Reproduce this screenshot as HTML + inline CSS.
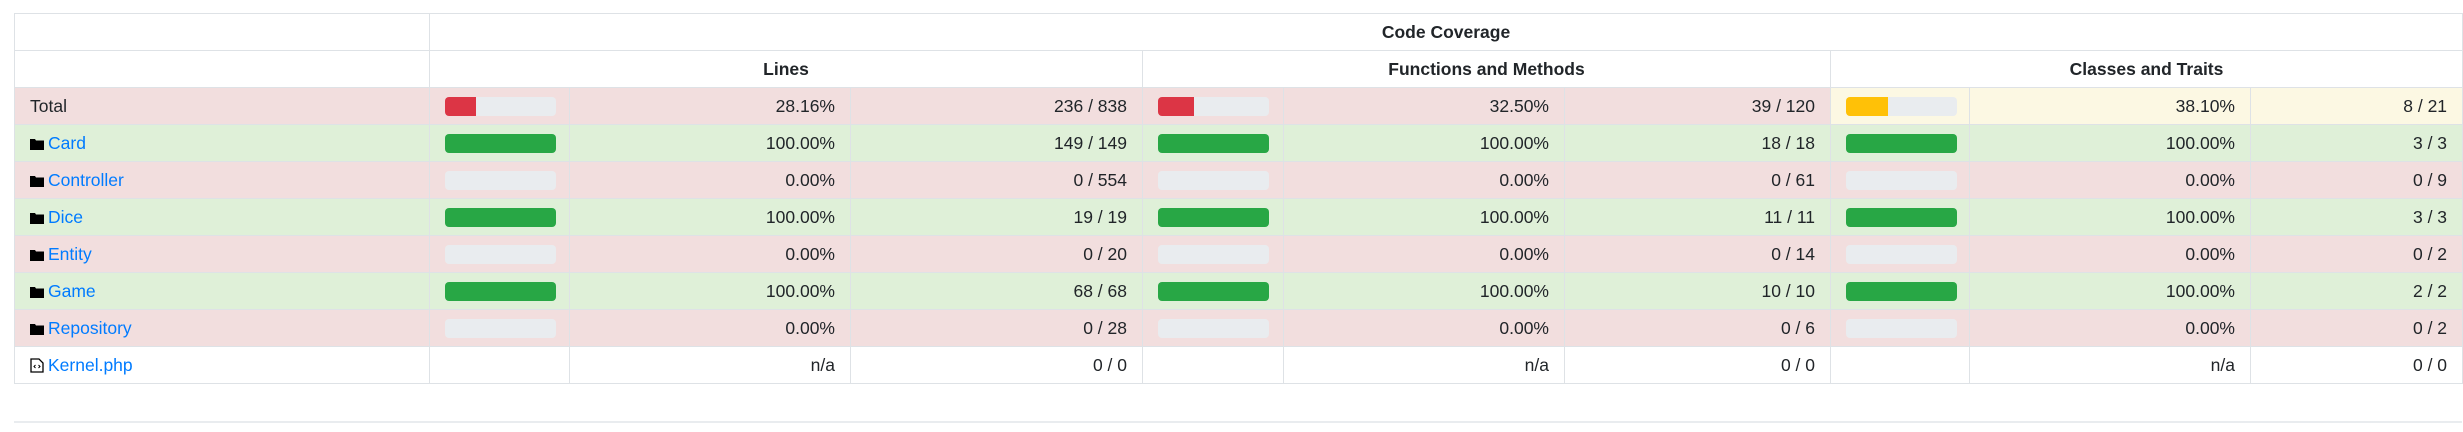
<!DOCTYPE html>
<html><head><meta charset="utf-8">
<style>
html,body{margin:0;padding:0;background:#fff;width:2463px;height:432px;overflow:hidden;}
body{font-family:"Liberation Sans",Arial,sans-serif;font-size:17.5px;color:#212529;position:relative;}
table{position:absolute;left:14px;top:13px;width:2448px;border-collapse:collapse;table-layout:fixed;}
td,th{border:1px solid #dee2e6;height:37px;padding:0 15px;box-sizing:border-box;white-space:nowrap;line-height:20px;}
th{font-weight:bold;text-align:center;}
td{text-align:right;}
td.n{text-align:left;}
.d{background:#f2dede}.s{background:#dff0d8}.w{background:#fcf8e3}
.bar{width:111px;height:19px;border-radius:4px;background:#e9ecef;overflow:hidden;}
.bar i{display:block;height:19px;}
.r{background:#dc3545}.g{background:#28a745}.y{background:#ffc107}
a{color:#007bff;text-decoration:none;}
svg{vertical-align:-1px;margin-right:4px;}
.hr{position:absolute;left:14px;top:421px;width:2448px;height:2px;background:#e9ecef;}
</style></head><body>
<table>
<colgroup><col style="width:415px"><col style="width:140px"><col style="width:281px"><col style="width:292px"><col style="width:141px"><col style="width:281px"><col style="width:266px"><col style="width:139px"><col style="width:281px"><col style="width:212px"></colgroup>
<tr><th style="border-right:1px solid #dee2e6"></th><th colspan="9">Code Coverage</th></tr>
<tr><th></th><th colspan="3">Lines</th><th colspan="3">Functions and Methods</th><th colspan="3">Classes and Traits</th></tr>
<tr><td class="n d">Total</td><td class="d"><div class="bar"><i class="r" style="width:31px"></i></div></td><td class="d">28.16%</td><td class="d">236 / 838</td><td class="d"><div class="bar"><i class="r" style="width:36px"></i></div></td><td class="d">32.50%</td><td class="d">39 / 120</td><td class="w"><div class="bar"><i class="y" style="width:42px"></i></div></td><td class="w">38.10%</td><td class="w">8 / 21</td></tr>
<tr><td class="n s"><svg width="14" height="12" viewBox="0 0 14 12"><path d="M0 1h5l1 1.5h8V12H0z" fill="#000"/></svg><a>Card</a></td><td class="s"><div class="bar"><i class="g" style="width:111px"></i></div></td><td class="s">100.00%</td><td class="s">149 / 149</td><td class="s"><div class="bar"><i class="g" style="width:111px"></i></div></td><td class="s">100.00%</td><td class="s">18 / 18</td><td class="s"><div class="bar"><i class="g" style="width:111px"></i></div></td><td class="s">100.00%</td><td class="s">3 / 3</td></tr>
<tr><td class="n d"><svg width="14" height="12" viewBox="0 0 14 12"><path d="M0 1h5l1 1.5h8V12H0z" fill="#000"/></svg><a>Controller</a></td><td class="d"><div class="bar"></div></td><td class="d">0.00%</td><td class="d">0 / 554</td><td class="d"><div class="bar"></div></td><td class="d">0.00%</td><td class="d">0 / 61</td><td class="d"><div class="bar"></div></td><td class="d">0.00%</td><td class="d">0 / 9</td></tr>
<tr><td class="n s"><svg width="14" height="12" viewBox="0 0 14 12"><path d="M0 1h5l1 1.5h8V12H0z" fill="#000"/></svg><a>Dice</a></td><td class="s"><div class="bar"><i class="g" style="width:111px"></i></div></td><td class="s">100.00%</td><td class="s">19 / 19</td><td class="s"><div class="bar"><i class="g" style="width:111px"></i></div></td><td class="s">100.00%</td><td class="s">11 / 11</td><td class="s"><div class="bar"><i class="g" style="width:111px"></i></div></td><td class="s">100.00%</td><td class="s">3 / 3</td></tr>
<tr><td class="n d"><svg width="14" height="12" viewBox="0 0 14 12"><path d="M0 1h5l1 1.5h8V12H0z" fill="#000"/></svg><a>Entity</a></td><td class="d"><div class="bar"></div></td><td class="d">0.00%</td><td class="d">0 / 20</td><td class="d"><div class="bar"></div></td><td class="d">0.00%</td><td class="d">0 / 14</td><td class="d"><div class="bar"></div></td><td class="d">0.00%</td><td class="d">0 / 2</td></tr>
<tr><td class="n s"><svg width="14" height="12" viewBox="0 0 14 12"><path d="M0 1h5l1 1.5h8V12H0z" fill="#000"/></svg><a>Game</a></td><td class="s"><div class="bar"><i class="g" style="width:111px"></i></div></td><td class="s">100.00%</td><td class="s">68 / 68</td><td class="s"><div class="bar"><i class="g" style="width:111px"></i></div></td><td class="s">100.00%</td><td class="s">10 / 10</td><td class="s"><div class="bar"><i class="g" style="width:111px"></i></div></td><td class="s">100.00%</td><td class="s">2 / 2</td></tr>
<tr><td class="n d"><svg width="14" height="12" viewBox="0 0 14 12"><path d="M0 1h5l1 1.5h8V12H0z" fill="#000"/></svg><a>Repository</a></td><td class="d"><div class="bar"></div></td><td class="d">0.00%</td><td class="d">0 / 28</td><td class="d"><div class="bar"></div></td><td class="d">0.00%</td><td class="d">0 / 6</td><td class="d"><div class="bar"></div></td><td class="d">0.00%</td><td class="d">0 / 2</td></tr>
<tr><td class="n"><svg width="14" height="15" viewBox="0 0 14 15" style="vertical-align:-2px"><path d="M1 1h8l4 4v9H1z" fill="none" stroke="#000" stroke-width="1.3"/><path d="M5.5 7L4 8.5 5.5 10M8.5 7L10 8.5 8.5 10" fill="none" stroke="#000" stroke-width="1"/></svg><a>Kernel.php</a></td><td></td><td>n/a</td><td>0 / 0</td><td></td><td>n/a</td><td>0 / 0</td><td></td><td>n/a</td><td>0 / 0</td></tr>
</table>
<div class="hr"></div>
</body></html>
